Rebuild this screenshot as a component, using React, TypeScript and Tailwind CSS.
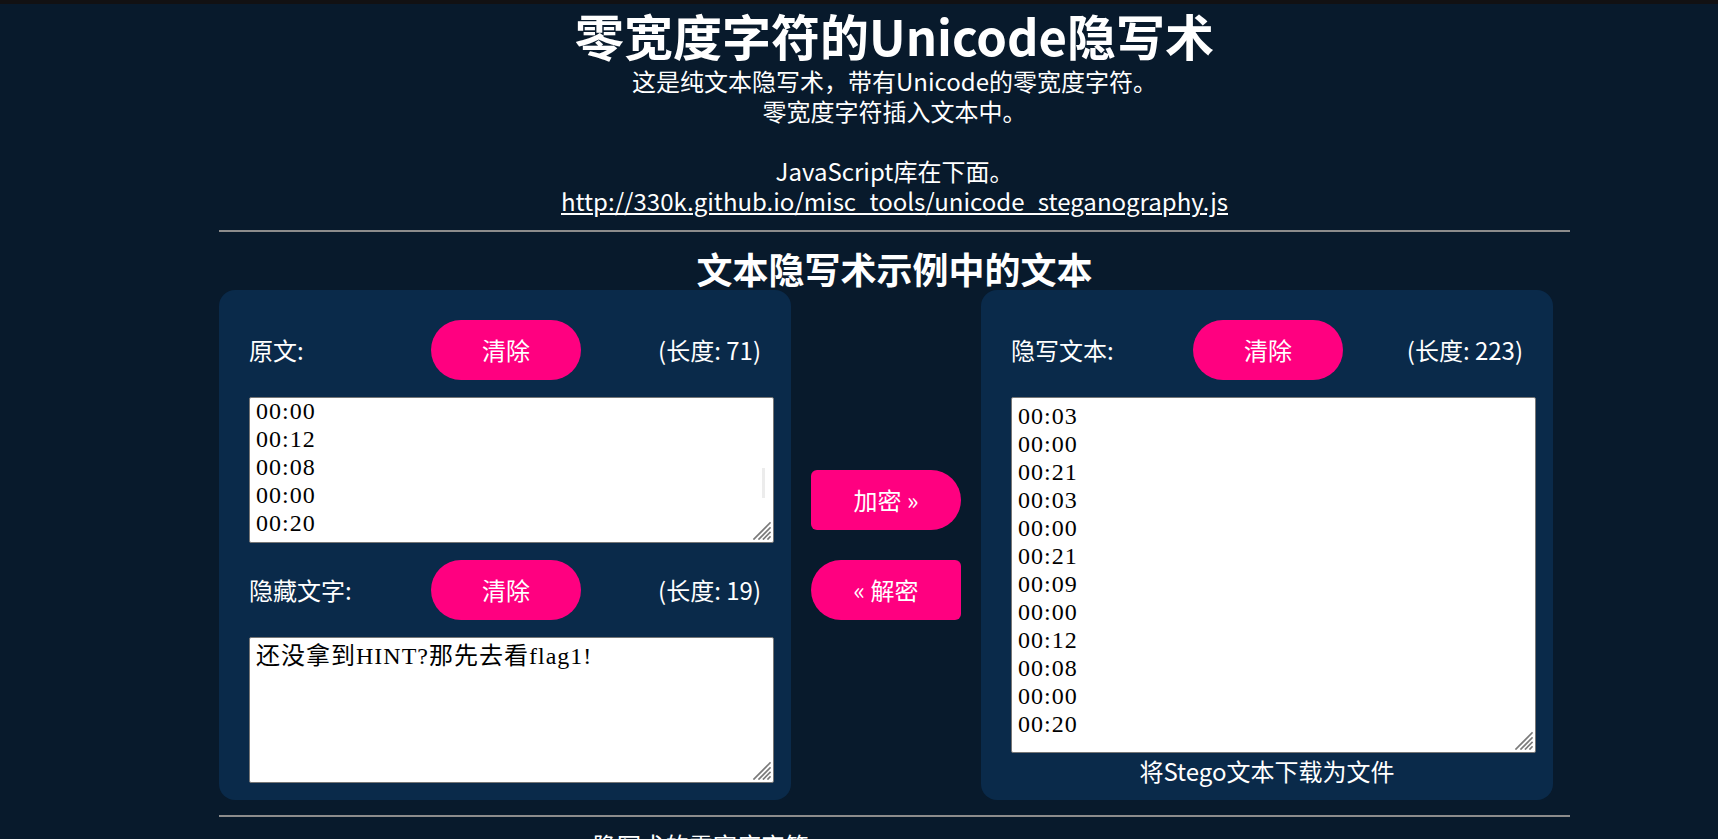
import React from "react";

const leftLines = ["00:00", "00:12", "00:08", "00:00", "00:20"];
const stegoLines = [
  "00:03", "00:00", "00:21", "00:03", "00:00", "00:21",
  "00:09", "00:00", "00:12", "00:08", "00:00", "00:20",
];

function Grip() {
  return (
    <svg
      className="absolute right-[2px] bottom-[2px]"
      width="20"
      height="20"
      viewBox="0 0 20 20"
      stroke="#7a7a7a"
      strokeWidth="1.7"
      strokeLinecap="square"
    >
      <line x1="19" y1="3" x2="3" y2="19" />
      <line x1="19" y1="8" x2="8" y2="19" />
      <line x1="19" y1="12.5" x2="12.5" y2="19" />
      <line x1="19" y1="17" x2="17" y2="19" />
    </svg>
  );
}

function TextBox({
  lines,
  h,
  shift = false,
  thumb = false,
}: {
  lines: string[];
  h: string;
  shift?: boolean;
  thumb?: boolean;
}) {
  return (
    <div
      className={`relative w-[525px] ${h} overflow-hidden rounded-[2px] border border-[#767676] bg-white px-[6px] ${shift ? "pt-[0px]" : "pt-[4px]"} font-['Liberation_Serif','Noto_Sans_CJK_SC',serif] text-[24px] leading-[28px] tracking-[1px] text-black`}
    >
      <div className={shift ? "-mt-[1px]" : ""}>
        {lines.map((l, i) => (
          <div key={i}>{l}</div>
        ))}
      </div>
      {thumb && <span className="absolute right-[8px] top-[70px] h-[30px] w-[3px] bg-[#ececec]" />}
      <Grip />
    </div>
  );
}

function ControlRow({ label, len }: { label: string; len: string }) {
  return (
    <div className="grid h-[60px] w-[525px] grid-cols-[182px_150px_1fr] items-center">
      <span>{label}</span>
      <button className="h-[60px] w-[150px] rounded-full bg-[#ff0080] text-white">清除</button>
      <span className="pr-[13px] text-right">{len}</span>
    </div>
  );
}

export default function App() {
  return (
    <div className="min-h-[839px] bg-[#081a2c] font-['Noto_Sans_CJK_SC',sans-serif] text-[24px] text-white">
      <div className="h-[4px] bg-[#121113]" />
      <div className="ml-[219px] w-[1351px]">
        <h1 className="text-center text-[49px] font-bold leading-[62px]">零宽度字符的Unicode隐写术</h1>
        <div className="text-center leading-[30px]">
          <p>这是纯文本隐写术，带有Unicode的零宽度字符。</p>
          <p>零宽度字符插入文本中。</p>
          <p>&nbsp;</p>
          <p>JavaScript库在下面。</p>
          <p>
            <a href="#" className="underline">
              http://330k.github.io/misc_tools/unicode_steganography.js
            </a>
          </p>
        </div>
        <hr className="mt-[14px] border-t-2 border-[#8c8c8c]" />
        <h2 className="mt-[16px] text-center text-[36px] font-bold leading-[40px]">文本隐写术示例中的文本</h2>
        <div className="mt-[2px] flex">
          <div className="w-[572px] rounded-2xl bg-[#0a2a4a] pt-[30px] pb-[17px] pl-[30px]">
            <ControlRow label="原文:" len="(长度: 71)" />
            <div className="mt-[17px]">
              <TextBox lines={leftLines} h="h-[146px]" shift thumb />
            </div>
            <div className="mt-[17px]">
              <ControlRow label="隐藏文字:" len="(长度: 19)" />
            </div>
            <div className="mt-[17px]">
              <TextBox lines={["还没拿到HINT?那先去看flag1!"]} h="h-[146px]" />
            </div>
          </div>
          <div className="flex w-[190px] flex-col items-center justify-center gap-[30px]">
            <button className="h-[60px] w-[150px] rounded-l-[6px] rounded-r-[30px] bg-[#ff0080] text-white">加密 »</button>
            <button className="h-[60px] w-[150px] rounded-l-[30px] rounded-r-[6px] bg-[#ff0080] text-white">« 解密</button>
          </div>
          <div className="w-[572px] rounded-2xl bg-[#0a2a4a] pt-[30px] pl-[30px]">
            <ControlRow label="隐写文本:" len="(长度: 223)" />
            <div className="mt-[17px]">
              <TextBox lines={stegoLines} h="h-[356px]" />
            </div>
            <div className="-ml-[30px] pt-[3px] text-center leading-[30px]">将Stego文本下载为文件</div>
          </div>
        </div>
        <hr className="mt-[15px] border-t-2 border-[#8c8c8c]" />
        <div className="mt-[13px] pl-[374px] leading-[30px]">隐写术的零宽度字符</div>
      </div>
    </div>
  );
}
